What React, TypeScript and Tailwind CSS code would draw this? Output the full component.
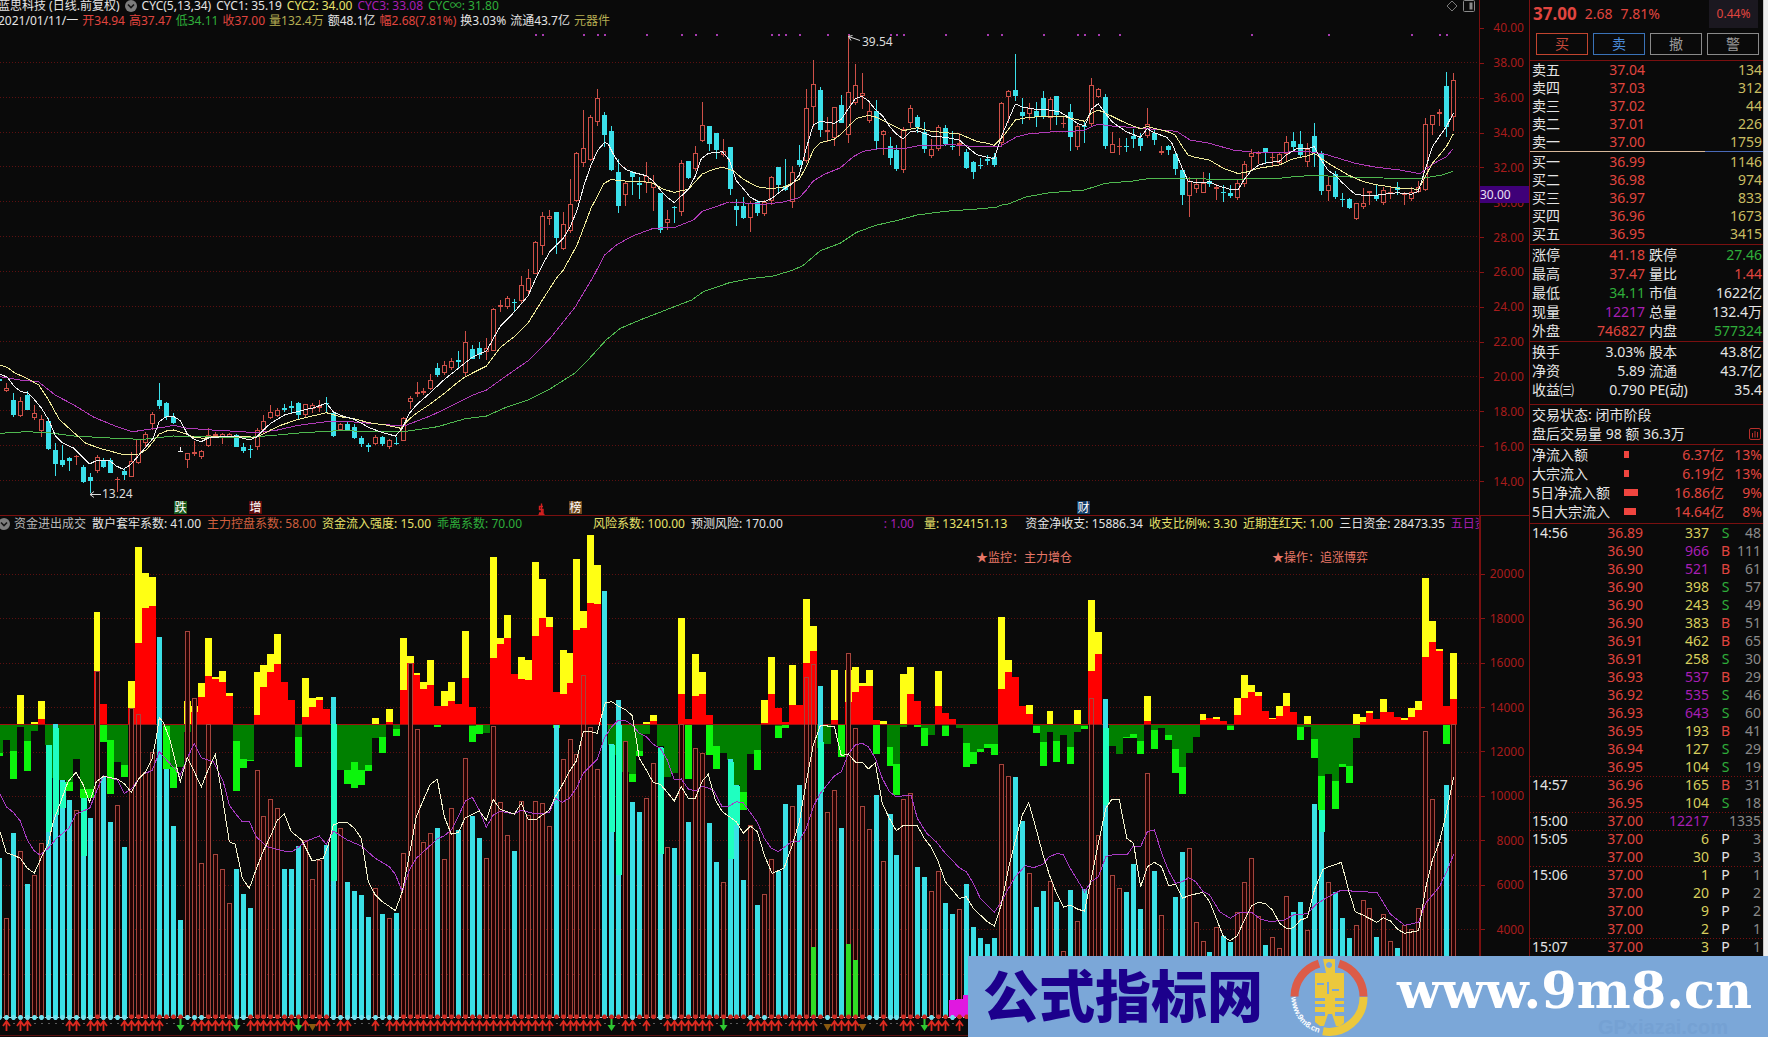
import React from "react";

const FONT = "font-['Noto_Sans','Noto_Sans_CJK_SC',sans-serif]";

/* ---------- chart data (three units per pixel vertically) ---------- */

// kind + high,bodyTop,bodyBottom,low ; r = rising, c = falling
const CANDLES =
  "c1136,1138,1143,1144 r1150,1165,1174,1176 c1178,1200,1244,1252 r1192,1202,1247,1252 c1172,1185,1229,1229 r1215,1240,1253,1260 r1245,1258,1293,1310 c1255,1263,1348,1350 c1330,1350,1391,1427 c1335,1380,1394,1400 c1372,1375,1382,1412 r1364,1367,1371,1395 c1395,1402,1447,1448 c1418,1430,1442,1480 r1366,1370,1414,1418 c1375,1380,1400,1404 c1375,1381,1418,1420 r1430,1436,1441,1476 c1405,1412,1424,1440 r1355,1384,1430,1432 r1318,1318,1390,1392 " +
  "r1296,1302,1330,1342 r1235,1241,1272,1290 c1150,1200,1217,1226 c1206,1209,1252,1260 c1238,1250,1268,1272 w1342,1354,1357,1357 r1358,1360,1379,1403 r1322,1357,1363,1368 r1350,1354,1370,1376 r1285,1305,1337,1340 r1296,1303,1307,1312 r1300,1303,1312,1332 r1300,1303,1312,1312 c1302,1304,1340,1340 c1330,1342,1352,1358 c1335,1348,1350,1373 r1285,1291,1340,1350 r1245,1262,1290,1300 r1216,1235,1253,1257 r1225,1229,1247,1250 " +
  "c1212,1225,1229,1235 c1203,1219,1223,1238 c1205,1208,1244,1257 r1212,1213,1245,1250 r1208,1214,1226,1240 r1200,1219,1224,1236 c1190,1208,1210,1240 c1235,1238,1308,1310 r1270,1273,1291,1293 c1262,1272,1289,1293 c1272,1281,1314,1316 c1308,1315,1331,1340 c1328,1335,1342,1356 r1306,1312,1331,1336 c1308,1311,1332,1338 r1318,1321,1340,1348 c1310,1329,1333,1334 r1250,1253,1322,1324 r1188,1193,1207,1228 r1147,1176,1181,1190 " +
  "r1165,1173,1180,1184 r1122,1141,1167,1170 c1090,1104,1125,1132 r1083,1095,1118,1124 r1075,1083,1105,1110 c1053,1080,1086,1105 r992,1025,1120,1130 c1035,1046,1076,1078 c1027,1044,1064,1078 r1015,1043,1057,1080 r925,926,1052,1054 r900,914,922,936 r888,895,920,928 c896,906,910,936 r828,856,902,910 r806,834,872,886 r723,725,821,823 r637,647,739,766 r630,647,657,676 c636,637,713,762 " +
  "r637,673,748,750 r537,613,692,698 r457,458,602,606 r330,443,488,502 r344,352,480,484 r268,295,365,378 c335,346,405,440 c378,393,509,512 c476,517,617,638 r542,550,586,618 c514,516,530,584 c530,548,556,597 r486,527,550,578 r524,550,564,632 c578,579,689,698 r630,658,670,690 c618,620,622,668 r480,490,637,648 c482,484,534,536 r438,458,508,514 " +
  "r305,376,424,426 c377,379,431,452 c398,400,449,476 r418,452,466,472 c440,442,566,586 c598,619,629,677 c592,618,653,656 r604,609,653,695 c600,606,638,648 r600,605,641,647 r528,530,604,614 c500,502,554,576 c477,557,570,574 r497,515,606,624 c436,480,494,500 r268,325,484,490 r180,253,320,380 c262,270,391,412 r350,391,395,426 r320,322,415,438 " +
  "c286,315,368,370 r104,277,406,428 r192,256,308,316 r220,278,287,326 r310,332,362,368 c300,332,422,450 r390,394,406,464 c412,438,473,496 c436,450,506,512 r382,388,509,518 r316,325,368,384 c345,351,380,398 c366,396,446,460 r418,446,467,474 r374,382,448,454 c374,384,433,438 c392,438,440,450 r400,428,436,468 c448,456,505,508 c484,487,515,536 " +
  "c474,494,498,508 c466,476,484,496 c458,470,495,502 r306,308,428,440 r270,272,290,370 c162,270,287,304 c294,336,349,372 r310,324,342,360 c306,332,351,380 c272,293,349,356 r292,296,355,390 c288,289,344,374 r350,368,372,384 c312,336,410,452 r370,379,441,450 c364,377,382,428 r234,256,372,380 r264,268,290,294 c283,291,437,448 r396,432,458,460 " +
  "r414,437,441,464 c414,437,439,456 c386,408,417,444 c400,414,437,452 r324,371,408,414 c388,398,420,436 r438,454,458,464 c434,438,450,464 c456,461,506,524 c508,511,584,614 r530,542,587,652 r534,553,566,580 r516,548,578,580 c520,543,552,562 r552,562,566,600 c555,575,578,605 c556,578,588,594 r538,549,594,600 r482,493,552,560 r448,460,472,512 " +
  "r452,457,461,492 c444,445,458,490 r460,470,475,498 r458,462,490,496 r407,427,462,484 c396,423,440,456 c394,432,464,470 r428,448,486,502 c370,408,460,500 c452,458,573,584 r532,554,574,602 c512,521,590,598 c580,597,599,620 c594,597,624,628 r608,610,656,660 r564,609,622,626 r572,574,580,616 c552,586,598,604 r560,570,608,614 r558,575,579,596 " +
  "c546,560,570,584 r576,582,586,616 r560,576,598,604 r542,560,576,580 r354,373,569,574 r344,346,374,404 r326,337,341,378 c216,258,380,410 r220,240,350,394";

const VOLUME =
  "c1028 r1210 c954 r1009 c1107 r1080 r985 c690 c628 c795 c855 r885 c850 c908 r468 c785 c921 r871 c996 r580 r598 r770 r710 c367 c762 c933 c1215 r349 r550 r1045 r626 r1018 r1062 r1165 c1062 c1137 c1179 r766 r904 r853 r880 c1062 c1062 c993 r976 r1092 r1035 c990 c547 r940 c1101 c1128 c1140 c1206 r1120 c1197 r1210 c1194 r1015 r445 r643 r982 r955 c939 r1033 r880 c945 r730 c903 c969 r1030 r634 " +
  "r862 r961 c1008 r858 r900 r858 r865 r934 c630 r733 r673 r717 r479 r637 r763 c228 c687 c555 r679 c860 c891 r850 r745 c696 r997 c999 r628 c921 r700 r715 c924 c1041 r1100 c732 c810 c1095 r931 c1170 r1137 r1033 c1069 c867 r874 c810 r487 r448 c513 r891 r826 c939 r415 r640 r874 r942 c840 r1039 c897 c1020 r853 r835 c1056 c1086 r1129 r1069 c1164 c1197 r1183 c1107 c1236 c1269 c1287 c1269 " +
  "r748 r784 c786 c918 r1075 c1176 c1128 r1099 c1161 r1308 c1125 r1219 c1122 r550 r961 c552 r1081 r1120 c1131 c1047 c1182 r775 c1068 r1201 r1330 c1146 c1011 r1000 r1221 r1279 c1311 r1237 c1263 c1281 r1192 r1102 r1030 r1204 c1290 r1267 r1300 r1144 c1191 c1161 r1246 c867 c885 r1102 c1131 c1209 c1269 r1231 r1156 r1180 c1266 r1198 r1279 c1299 r1231 r1243 r1180 r649 r853 r980 c810 r628";

// inflow "yellowTop,redTop" and/or outflow "~darkBottom,brightBottom"
const FLOW =
  "~714,722 ~675 ~708,792 540,628~636 ~678,768 621,628~648 558,612 ~690 ~790 ~795 ~801,828 ~733 ~822,850 ~822,850 291,468 567,567~628,682 ~675,836 ~741 ~750,786 498,580 96,384 174,279 186,273 ~628 ~632,762 ~755,818 ~755 558,628~650 572,590 504,546 369,483 486,492 468,501 534,543 ~678,828 ~732,759 ~735,738 471,600 450,516 417,471 357,447 501,501 555,555 ~666,756 489,606 549,576 546,555 583,583 ~628 ~766 ~765,807 ~741,819 ~765,810 ~750,768 609,628~669 ~666,714 582,621 ~642,663 369,525 423,445 474,480 501,522 435,510 573,573~628,636 528,573 501,558 567,567 348,489 576,576~632,682 626,626~628,657 ~654 126,429 " +
  "369,387 300,369 477,477 426,492 435,495 141,363 192,309 306,336 531,531~628,640 405,537 414,504 132,345 288,339 60,264 150,267 ~628 ~690 ~720 ~772 ~777,801 ~708,723 621,628~657 600,618 ~693 ~786 ~774 309,537 612,612~628,792 417,543 471,537 600,600~628,720 ~693,762 ~714 ~735 ~810 ~830,885 ~717 ~705,765 555,624 426,537 579,579~632,669 621,621~628,639 450,570 570,570 252,444 333,408 ~700 ~687 465,615 ~628,726 465,560 456,531 504,513 465,513 615,615~628,717 618,626 ~696,753 ~747,840 477,628~636 456,537 558,558~628,636 ~639,693 ~660 468,573 594,594~633,663 612,612 ~640 ~684,756 ~711,747 ~702,711 ~687,699 ~687,720 " +
  "306,522 435,471 486,486 573,573 570,597 ~632,654 ~681,753 588,628~651 ~678,741 ~660 ~696,747 585,628~651 ~632,642 255,468 351,417 ~628 ~693 ~717 ~666,670 ~657,669 ~678,717 543,618 ~645,702 ~640 ~660,675 ~702,774 ~756,837 ~714 ~666 597,615 609,609 606,612 618,618 ~632,645 549,600 480,549 510,531 531,543 588,588 608,612 573,603 534,573 591,591 ~636,675 603,628~636 ~672,729 ~783,885 ~777 ~798,882 ~747,755 ~753,804 597,628~669 606,620 588,594 612,612 552,591 591,591 606,606 609,614 579,606 558,585 189,426 318,381 402,408 573,573~628,687 414,552";

// falling bars whose upper part is blended with the outflow colour
const BLENDS: Record<number, [number, number]> = {
  6: [690, 950], 7: [640, 900], 8: [800, 880], 11: [850, 1022], 47: [628, 1098], 87: [690, 950], 88: [630, 1080],
  94: [700, 1018], 104: [740, 1032], 105: [812, 930], 117: [680, 830], 158: [640, 870], 189: [885, 950],
};
const DARK_BARS = [13, 18, 26, 27, 58, 121];
const SIGNAL_DOTS = [76, 77, 83, 85, 86, 92, 97, 99, 102, 110, 111, 112, 114, 118, 121, 127, 128, 129, 135, 141, 143, 149, 154, 155, 157, 160, 179, 190, 202, 206, 207];
const GREEN_VOL: [number, number][] = [[116, 1296], [121, 1287], [122, 1335]];
const MAGENTA_VOL: [number, number][] = [[136, 1455], [137, 1452], [138, 1440]];
const UP_RANGES: [number, number][] = [
  [0, 0], [2, 3], [9, 10], [12, 14], [17, 22], [27, 32], [35, 41], [43, 43], [45, 46], [48, 49], [53, 53], [55, 78], [80, 85],
  [89, 90], [92, 92], [95, 101], [107, 111], [113, 116], [119, 122], [126, 126], [129, 130], [133, 135], [137, 137],
];
const DOWN_GREEN = [25, 33, 42, 87, 103, 132];
const DOWN_GOLD = [44, 118, 123];
const CYAN_DOT_RANGES: [number, number][] = [[-1, 12], [14, 17], [26, 28], [33, 34], [47, 56], [90, 90], [94, 94], [96, 96], [107, 107], [109, 109], [118, 118], [124, 125], [127, 128], [133, 133], [136, 136]];

type Seg = [number, number, string];
const CYC1: Seg[] = [
  [0, 2.45, "0,1122 18,1132 35,1160 52,1175 68,1178 85,1200 102,1225 119,1260 136,1308 152,1328 180,1344 219,1392 236,1382 268,1382 285,1398 302,1408 320,1394 340,1366 358,1340 375,1315 390,1265 407,1250 425,1249 442,1262 459,1302 476,1318 493,1325 511,1314 545,1310 575,1308 594,1314 610,1320 628,1312 645,1290 663,1270 697,1245 731,1234 766,1224 800,1210 817,1236 834,1246 868,1258 903,1282 937,1298 969,1308 986,1284 1003,1240 1020,1215 1054,1178 1089,1138 1123,1105 1157,1072 1192,1052 1209,1015 1226,978 1260,936 1294,887 1311,840 1329,795 1346,757 1363,735 1380,715 1397,680 1414,630 1431,555 1448,495 1465,450"],
  [500, 3, "314,427 325,432 340,462 356,488 377,508 398,517 439,527 460,543 481,570 502,592 523,608 544,588 565,568 586,528 604,476 625,460 667,455 688,480 709,542 730,566 751,592 772,603 793,605 814,596 850,568 877,552 898,525 919,445 940,374 961,364 1003,370 1024,358 1045,326 1066,296 1085,289 1105,302 1127,330 1148,348 1169,380 1189,402 1210,417 1231,396 1252,392 1294,408 1336,412 1378,420 1400,440 1430,464 1462,472 1483,476 1504,410 1546,312"],
  [1000, 3, "67,321 106,328 148,330 180,336 211,355 232,370 255,378 274,328 295,311 316,340 337,366 379,395 421,412 442,386 463,398 500,412 515,428 530,465 547,505 565,545 607,548 628,545 649,556 691,568 715,568 733,538 754,512 775,496 800,488 838,484 859,465 890,446 922,446 943,440 964,480 985,512 1006,525 1024,545 1045,565 1066,583 1110,588 1150,583 1192,578 1234,583 1255,574 1276,508 1297,440 1318,410 1339,380 1360,340"],
];
const CYC2: Seg[] = [
  [0, 2.45, "0,1095 18,1102 35,1118 68,1136 95,1155 119,1200 145,1258 180,1297 210,1330 250,1347 300,1363 340,1362 358,1350 375,1325 390,1302 410,1292 425,1290 442,1296 476,1312 500,1315 520,1310 600,1310 628,1312 663,1290 690,1275 731,1258 800,1238 834,1250 868,1256 903,1268 945,1275 982,1285 1003,1257 1020,1240 1054,1212 1089,1180 1123,1145 1140,1130 1192,1098 1226,1042 1260,1010 1294,968 1329,900 1363,835 1380,810 1414,735 1448,625 1480,550"],
  [500, 3, "335,538 356,542 439,546 460,550 490,568 523,577 565,568 607,522 640,508 667,502 700,512 730,538 772,560 814,566 856,560 898,538 919,500 940,450 961,428 1003,418 1024,402 1050,374 1070,355 1105,346 1130,352 1150,362 1189,382 1210,392 1252,383 1294,394 1378,402 1430,424 1462,430 1483,436 1510,408 1546,360"],
  [1000, 3, "85,352 127,350 190,348 211,355 255,364 274,340 295,330 330,346 379,370 421,386 442,380 500,394 525,404 547,440 565,466 586,472 628,480 670,505 712,520 733,518 775,505 838,495 880,476 922,468 943,460 985,490 1045,525 1087,544 1129,554 1192,564 1255,568 1276,530 1297,490 1318,466 1339,440 1360,402"],
];
const CYC3: Seg[] = [
  [0, 2.45, "0,1130 50,1140 95,1146 136,1186 180,1214 230,1252 290,1282 325,1295 400,1282 425,1276 459,1285 520,1290 575,1294 628,1298 680,1290 731,1276 800,1265 868,1266 945,1274 990,1278 1054,1248 1106,1218 1157,1186 1192,1170 1240,1128 1294,1082 1346,1018 1410,920"],
  [500, 3, "238,900 280,830 314,765 350,734 398,708 460,685 525,682 580,660 607,634 688,606 793,613 850,606 898,593 919,570 940,543 975,522 1020,504 1060,470 1090,454 1130,447 1210,446 1252,438 1357,434 1430,440 1504,439"],
  [1000, 3, "5,436 50,410 85,402 150,396 250,392 274,380 295,373 337,378 420,384 530,394 570,420 628,430 700,450 754,456 838,457 922,454 980,464 1066,490 1129,502 1200,510 1260,521 1297,493 1339,470 1360,446"],
];
const CYC8: Seg[] = [
  [0, 2.45, "0,1300 65,1295 119,1298 180,1308 300,1316 350,1318 425,1308 545,1312 600,1313 680,1305 740,1298 830,1292 950,1295 1000,1293 1072,1280 1140,1256 1192,1248 1240,1222 1294,1200 1346,1168 1410,1118 1448,1070 1485,1020 1520,985 1568,960"],
  [500, 3, "575,900 610,875 688,848 750,836 820,828 880,810 910,796 961,752 1020,730 1070,697 1127,676 1189,662 1252,645 1336,634 1430,627 1490,622"],
  [1000, 3, "0,616 25,612 80,590 150,578 253,570 316,550 400,543 450,535 690,538 838,535 880,530 945,526 1020,530 1150,534 1255,536 1297,530 1330,524 1360,514"],
];
const MA_WHITE: Seg[] = [
  [0, 3, "0,950 19,1013 40,1020 61,1030 82,1060 103,1074 124,1028 145,985 160,920 186,850 204,800 228,772 248,806 269,862 289,800 310,784 352,792 373,806 394,832 415,793 436,772 457,730 470,660 478,608 490,622 510,675 541,800 562,727 583,770 604,816 625,763 646,718 667,845 688,980 706,988 727,1090 748,1120 769,1062 790,1008 811,965 832,916 853,897 874,950 905,975 937,1038 970,1030 985,990 1000,930 1020,922 1042,922 1063,940 1084,970 1105,1100 1126,1140 1147,1160 1168,1174 1186,1187 1207,1130 1228,1020 1249,905 1270,855 1291,808 1312,793 1333,905 1354,958 1375,952 1396,908 1438,888 1459,916 1480,853"],
  [500, 3, "0,883 43,897 64,865 85,914 106,915 148,885 166,845 187,810 208,770 229,738 250,650 271,650 292,655 300,620 316,563 335,560 355,573 377,585 397,602 418,730 439,765 460,803 481,808 502,832 523,858 544,815 565,850 586,850 607,798 625,778 646,855 667,890 709,920 730,955 751,933 772,950 793,1020 816,1075 852,1060 877,990 898,920 919,800 940,690 961,632 1003,634 1024,722 1045,717 1066,741 1087,741 1105,762 1126,743 1147,865 1168,910 1189,947 1210,931 1252,932 1273,970 1294,997 1315,1040 1336,1100 1378,1150 1399,1145 1420,1180 1462,1220 1483,1233"],
  [1000, 2.958, "4,1168 25,1060 45,980 66,900 85,863 105,935 126,1015 146,1080 167,1135 188,1176 208,1170 229,1182 250,1189 270,1090 291,985 313,880 330,854 353,854 375,970 395,985 416,1115 436,1055 457,1042 478,1055 499,1112 519,1108 540,1150 558,1142 599,1132 620,1160 661,1265 681,1277 702,1262 723,1215 744,1172 764,1162 785,1166 806,1185 827,1225 850,1242 868,1238 889,1215 909,1208 930,1125 955,1064 971,1056 1010,1042 1031,1125 1051,1190 1073,1200 1115,1222 1134,1208 1155,1218 1176,1243 1197,1255 1238,1247 1259,1120 1279,1035 1300,980 1321,890 1342,785"],
];
const MA_PURPLE: Seg[] = [
  [0, 3, "0,838 19,875 40,892 61,918 82,975 103,1008 120,1020 145,1000 170,970 208,938 228,897 269,880 289,830 310,782 352,795 373,835 394,822 425,780 457,766 478,710 500,735 541,780 562,730 583,685 604,728 640,740 670,800 688,870 706,895 727,920 748,920 769,965 800,995 832,1003 853,1008 880,1008 920,978 958,963 979,988 1000,948 1042,975 1084,993 1126,1030 1168,1055 1186,1078 1207,1130 1228,1065 1249,1030 1312,972 1333,962 1354,945 1375,905 1396,858 1417,847 1438,885 1459,937 1480,900"],
  [500, 3, "0,889 43,897 64,885 106,897 148,893 166,850 187,862 208,850 229,820 250,775 292,733 313,670 335,635 355,615 377,617 397,630 418,655 439,665 460,688 481,700 502,735 523,795 544,792 565,822 586,828 607,813 640,825 667,876 688,873 709,860 730,863 772,922 793,970 814,1000 835,1010 877,978 898,978 919,940 940,875 961,835 1003,783 1024,770 1045,717 1066,690 1087,685 1105,695 1126,730 1147,790 1168,830 1189,845 1233,840 1252,910 1280,955 1310,982 1336,1015 1378,1058 1399,1070 1420,1105 1441,1150 1462,1170 1483,1192"],
  [1000, 2.958, "4,1160 25,1120 45,1085 75,1052 100,1058 126,1048 146,1025 170,1015 188,1020 208,1060 250,1130 270,1100 291,1085 313,1025 340,1018 375,1020 395,993 416,995 436,950 457,945 478,1015 499,1068 519,1105 540,1100 558,1088 579,1100 599,1128 620,1140 650,1190 681,1210 710,1192 744,1192 770,1212 800,1220 840,1215 868,1200 909,1196 935,1168 971,1145 1010,1125 1060,1130 1115,1132 1155,1198 1197,1231 1238,1222 1259,1165 1300,1115 1321,1070 1342,1018"],
];

const trace = (segs: Seg[], top: number) =>
  segs
    .map(([x0, k, pts]) =>
      pts
        .split(" ")
        .map((p) => {
          const [x, y] = p.split(",").map(Number);
          return `${(x0 + x / k).toFixed(1)},${(top + y / 3).toFixed(1)}`;
        })
        .join(" "),
    )
    .join(" ");

const cx = (i: number) => Math.floor(6.6 + 6.956 * i);
const inRanges = (i: number, ranges: [number, number][]) => ranges.some(([a, b]) => i >= a && i <= b);

/* ---------- charts ---------- */

function Line({ segs, top, color }: { segs: Seg[]; top: number; color: string }) {
  return <polyline points={trace(segs, top)} fill="none" stroke={color} strokeWidth={1} shapeRendering="crispEdges" />;
}

function PriceChart() {
  return (
    <svg viewBox="0 29 1479 486" preserveAspectRatio="none" className="block h-[486px] w-full" role="img" aria-label="日线K线图">
      {Array.from({ length: 13 }, (_, k) => {
        const y = Math.round(28 + 34.85 * (k + 1)) - 0.5;
        return <line key={k} x1={0} x2={1479} y1={y} y2={y} stroke="#5c1010" strokeDasharray="1 2" />;
      })}
      {SIGNAL_DOTS.map((i) => (
        <rect key={i} x={cx(i)} y={34} width={2} height={2} fill="#a83bb0" />
      ))}
      <g shapeRendering="crispEdges">
        {CANDLES.split(" ").map((t, n) => {
          const c = cx(n - 1);
          const [h, a, b, l] = t.slice(1).split(",").map((v) => Math.round(Number(v) / 3));
          const bh = Math.max(1, b - a);
          if (t[0] === "r")
            return (
              <g key={n} fill="#cf5048">
                <rect x={c} y={h} width={1} height={Math.max(0, a - h)} />
                <rect x={c} y={b} width={1} height={Math.max(0, l - b)} />
                {bh < 3 ? <rect x={c - 2} y={a} width={5} height={bh} /> : <rect x={c - 1.5} y={a + 0.5} width={4} height={bh - 1} fill="none" stroke="#cf5048" />}
              </g>
            );
          return (
            <g key={n} fill={t[0] === "w" ? "#eeeeee" : "#3be0ea"}>
              <rect x={c} y={h} width={1} height={Math.max(1, l - h)} />
              <rect x={c - 2} y={a} width={5} height={bh} />
            </g>
          );
        })}
      </g>
      <Line segs={CYC8} top={0} color="#4fb84f" />
      <Line segs={CYC3} top={0} color="#b03bb8" />
      <Line segs={CYC2} top={0} color="#f0eb9a" />
      <Line segs={CYC1} top={0} color="#f2f2f2" />
      <path d="M848.5 36.500L860 40.500M848.500 36.500l4-1M848.500 36.500l2.500 4M90 494.500H101M90 494.500l4-3M90 494.500l4 3" fill="none" stroke="#dddddd" />
      <path d="M543 506.500h-3.500v3h3.500v3.500h-4M541.500 503.500v11M538.500 514.500h6" fill="none" stroke="#d22020" strokeWidth={1.4} />
    </svg>
  );
}

function FlowChart() {
  const Y = (v: number) => Math.round(515 + v / 3);
  const base = 724;
  const floor = 1017;
  return (
    <svg viewBox="0 532 1479 505" preserveAspectRatio="none" className="block h-[505px] w-full" role="img" aria-label="资金进出成交图">
      {Array.from({ length: 10 }, (_, k) => {
        const y = Math.round(574 + 44.4 * k) + 0.5;
        return <line key={k} x1={0} x2={1479} y1={y} y2={y} stroke="#5c1010" strokeDasharray="1 2" />;
      })}
      <g shapeRendering="crispEdges">
        {FLOW.split(" ").map((t, n) => {
          const i = n - 1;
          const x = cx(i) - 3;
          const w = cx(i + 1) - 3 - x;
          const [up, down] = t.split("~");
          const parts: React.ReactNode[] = [];
          if (down) {
            const [d, b] = down.split(",").map((v) => Y(Number(v)));
            parts.push(<rect key="d" x={x} y={base} width={w} height={Math.max(0, d - base)} fill="#008000" />);
            if (b) parts.push(<rect key="b" x={x} y={d} width={w} height={Math.max(0, b - d)} fill="#0cf50c" />);
          }
          if (up) {
            const [y, r] = up.split(",").map((v) => Y(Number(v)));
            parts.push(<rect key="y" x={x} y={y} width={w} height={r - y} fill="#ffff14" />);
            parts.push(<rect key="r" x={x} y={r} width={w} height={Math.max(0, base + 1 - r)} fill="#ff0000" />);
          }
          return <g key={n}>{parts}</g>;
        })}
        <rect x={0} y={base} width={1457} height={1} fill="#a01010" />
        {VOLUME.split(" ").map((t, n) => {
          const i = n - 1;
          const c = cx(i);
          const y = Y(Number(t.slice(1)));
          if (t[0] === "c") return <rect key={n} x={c - 2} y={y} width={5} height={floor - y} fill="#3be0e6" />;
          const dark = DARK_BARS.includes(i);
          const fillTop = dark ? y : Math.max(y, base + 1);
          return (
            <g key={n}>
              <rect x={c - 2} y={fillTop} width={5} height={floor - fillTop} fill="#240202" />
              <rect x={c - 1.5} y={y + 0.5} width={4} height={floor - y} fill="none" stroke="#a5453d" />
            </g>
          );
        })}
        {Object.entries(BLENDS).map(([i, [a, b]]) => (
          <rect key={i} x={cx(Number(i)) - 2} y={Y(a)} width={6} height={Y(b) - Y(a)} fill="#1fffc0" />
        ))}
        {GREEN_VOL.map(([i, v]) => (
          <rect key={i} x={cx(i) - 2} y={Y(v)} width={5} height={floor - Y(v)} fill="#30dc26" />
        ))}
        {MAGENTA_VOL.map(([i, v]) => (
          <rect key={i} x={cx(i) - 3} y={Y(v)} width={7} height={floor - Y(v)} fill="#e018e0" />
        ))}
      </g>
      <Line segs={MA_PURPLE} top={515} color="#a83bc4" />
      <Line segs={MA_WHITE} top={515} color="#f6f4d0" />
      <line x1={0} x2={1457} y1={1017.5} y2={1017.5} stroke="#d8d8d8" strokeDasharray="2 1" />
      {Array.from({ length: 140 }, (_, n) => {
        const c = cx(n - 1) + 0.5;
        return inRanges(n - 1, CYAN_DOT_RANGES) ? (
          <path key={n} d={`M${c - 3} 1017.500l2-2.500h2l2 2.500l-2 2.500h-2z`} fill="#6fe2ee" />
        ) : (
          <path key={n} d={`M${c - 3} 1017l2-2.500h2l2 2.500l-2 2h-2z`} fill="#cc2a22" />
        );
      })}
      {Array.from({ length: 138 }, (_, i) => {
        const c = cx(i) + 0.5;
        if (inRanges(i, UP_RANGES)) return <path key={i} d={`M${c} 1031V1021M${c - 3.5} 1026l3.500-5l3.500 5`} fill="none" stroke="#dc2a20" strokeWidth={1.8} />;
        if (DOWN_GREEN.includes(i)) return <path key={i} d={`M${c - 1} 1019h2v6h3l-4 6l-4-6h3z`} fill="#2fc832" />;
        if (DOWN_GOLD.includes(i)) return <path key={i} d={`M${c - 4} 1024h8l-4 7z`} fill="#8a5a10" />;
        return <rect key={i} x={c} y={1023} width={1} height={1} fill="#aaaaaa" />;
      })}
      <line x1={0} x2={1479} y1={1035.5} y2={1035.5} stroke="#5a0f0f" />
    </svg>
  );
}

/* ---------- header texts ---------- */

function Toggle({ label }: { label: string }) {
  return (
    <button type="button" aria-label={label} className="flex size-3 shrink-0 items-center justify-center rounded-full bg-[#7d7d7d]">
      <svg viewBox="0 0 12 12" className="size-3" fill="none" stroke="#151515" strokeWidth="1.600">
        <path d="M3 4.500L6 7.500L9 4.500" />
      </svg>
    </button>
  );
}

const T = ({ c, children }: { c: string; children: React.ReactNode }) => <span className={c}>{children}</span>;

const WHITE = "text-[#e4e4e4]";
const RED = "text-[#e0453f]";
const GREEN = "text-[#2fae3a]";
const OLIVE = "text-[#b5ad52]";
const YELLOW = "text-[#e8e26a]";
const PURPLE = "text-[#a81fb4]";
const ORANGE = "text-[#d2603f]";

function PriceHeader() {
  return (
    <header className="h-[29px] whitespace-nowrap text-xs">
      <div className="flex h-[11px] items-center gap-[5px] leading-none">
        <span className="-ml-0.5 text-[#e4e4e4]">蓝思科技 (日线.前复权)</span>
        <Toggle label="指标菜单" />
        <T c={WHITE}>CYC(5,13,34)</T>
        <T c={WHITE}>CYC1: 35.19</T>
        <T c={YELLOW}>CYC2: 34.00</T>
        <T c={PURPLE}>CYC3: 33.08</T>
        <T c={GREEN}>CYC∞: 31.80</T>
        <button type="button" aria-label="标记" className="ml-auto">
          <svg viewBox="0 0 12 12" className="size-3" fill="none" stroke="#7a7a7a">
            <path d="M6 1L11 6L6 11L1 6Z" />
          </svg>
        </button>
        <button type="button" aria-label="侧栏" className="mr-1">
          <svg viewBox="0 0 12 12" className="size-3" fill="none" stroke="#8a8a8a">
            <rect x="0.500" y="0.500" width="11" height="11" rx="1" />
            <rect x="7" y="3" width="2" height="6" fill="#8a8a8a" />
          </svg>
        </button>
      </div>
      <div className="mt-0.5 -ml-0.5 flex gap-1 leading-4">
        <T c={WHITE}>2021/01/11/一</T>
        <T c={RED}>开34.94</T>
        <T c={RED}>高37.47</T>
        <T c={GREEN}>低34.11</T>
        <T c={RED}>收37.00</T>
        <T c={OLIVE}>量132.4万</T>
        <T c={WHITE}>额48.1亿</T>
        <T c={RED}>幅2.68(7.81%)</T>
        <T c={WHITE}>换3.03%</T>
        <T c={WHITE}>流通43.7亿</T>
        <T c={OLIVE}>元器件</T>
      </div>
    </header>
  );
}

function FlowHeader() {
  return (
    <header className="flex h-4 items-center gap-1.5 overflow-hidden whitespace-nowrap text-xs leading-4">
      <span className="-ml-0.5 flex items-center gap-1 text-[#b8b8b8]">
        <Toggle label="副图指标菜单" />
        资金进出成交
      </span>
      <T c={WHITE}>散户套牢系数: 41.00</T>
      <T c={ORANGE}>主力控盘系数: 58.00</T>
      <T c={YELLOW}>资金流入强度: 15.00</T>
      <T c={GREEN}>乖离系数: 70.00</T>
      <T c="text-[#e8e26a] ml-[65px]">风险系数: 100.00</T>
      <T c={WHITE}>预测风险: 170.00</T>
      <T c="text-[#a81fb4] ml-[95px]">: 1.00</T>
      <T c="text-[#e8e26a] ml-1">量: 1324151.13</T>
      <T c="text-[#e4e4e4] ml-3">资金净收支: 15886.34</T>
      <T c={YELLOW}>收支比例%: 3.30</T>
      <T c={YELLOW}>近期连红天: 1.00</T>
      <T c={WHITE}>三日资金: 28473.35</T>
      <T c={PURPLE}>五日资金</T>
    </header>
  );
}

/* ---------- quote panel ---------- */

type Row4 = [string, string, string, string, string, string];
const SELL = [["卖五", "37.04", "134"], ["卖四", "37.03", "312"], ["卖三", "37.02", "44"], ["卖二", "37.01", "226"], ["卖一", "37.00", "1759"]];
const BUY = [["买一", "36.99", "1146"], ["买二", "36.98", "974"], ["买三", "36.97", "833"], ["买四", "36.96", "1673"], ["买五", "36.95", "3415"]];
const INFO1: Row4[] = [
  ["涨停", "41.18", RED, "跌停", "27.46", GREEN],
  ["最高", "37.47", RED, "量比", "1.44", RED],
  ["最低", "34.11", GREEN, "市值", "1622亿", WHITE],
  ["现量", "12217", PURPLE, "总量", "132.4万", WHITE],
  ["外盘", "746827", RED, "内盘", "577324", GREEN],
];
const INFO2: Row4[] = [
  ["换手", "3.03%", WHITE, "股本", "43.8亿", WHITE],
  ["净资", "5.89", WHITE, "流通", "43.7亿", WHITE],
  ["收益㈢", "0.790", WHITE, "PE(动)", "35.4", WHITE],
];
const MONEY = [
  ["净流入额", "w-[5px]", "6.37亿", "13%"],
  ["大宗流入", "w-[5px]", "6.19亿", "13%"],
  ["5日净流入额", "w-[14px]", "16.86亿", "9%"],
  ["5日大宗流入", "w-[12px]", "14.64亿", "8%"],
];
const TICKS = (
  "14:56 36.89 337 S 48|- 36.90 966* B 111|- 36.90 521* B 61|- 36.90 398 S 57|- 36.90 243 S 49|- 36.90 383 B 51|- 36.91 462 B 65|- 36.91 258 S 30|- 36.93 537* B 29|- 36.92 535* S 46|- 36.93 643* S 60|- 36.95 193 B 41|- 36.94 127 S 29|- 36.95 104 S 19|" +
  "14:57 36.96 165 B 31|- 36.95 104 S 18|15:00 37.00 12217* - 1335|15:05 37.00 6 P 3|- 37.00 30 P 3|15:06 37.00 1 P 1|- 37.00 20 P 2|- 37.00 9 P 2|- 37.00 2 P 1|15:07 37.00 3 P 1"
)
  .split("|")
  .map((r) => r.split(" "));
const SIDE: Record<string, string> = { S: GREEN, B: RED, P: WHITE };

function Book({ rows }: { rows: string[][] }) {
  return (
    <table className="w-full table-fixed leading-[18px]">
      <tbody>
        {rows.map(([n, p, v]) => (
          <tr key={n}>
            <th scope="row" className="w-[50px] p-0 pl-0.5 text-left font-normal">{n}</th>
            <td className="w-[65px] p-0 text-right text-[#e0453f]">{p}</td>
            <td className="p-0 pr-px text-right text-[#c9bd62]">{v}</td>
          </tr>
        ))}
      </tbody>
    </table>
  );
}

function Info({ rows }: { rows: Row4[] }) {
  return (
    <table className="w-full table-fixed leading-[19px]">
      <tbody>
        {rows.map(([a, b, bc, c, d, dc]) => (
          <tr key={a}>
            <th scope="row" className="w-[50px] p-0 pl-0.5 text-left font-normal whitespace-nowrap">{a}</th>
            <td className="w-[65px] p-0 text-right"><span className={bc}>{b}</span></td>
            <th scope="row" className="w-[48px] p-0 pl-1 text-left font-normal whitespace-nowrap">{c}</th>
            <td className="p-0 pr-px text-right"><span className={dc}>{d}</span></td>
          </tr>
        ))}
      </tbody>
    </table>
  );
}

const BUTTONS = [
  ["买", "border-[#c2452f] text-[#c84a3c]"],
  ["卖", "border-[#3a72b8] text-[#4a8ad8]"],
  ["撤", "border-[#8a8a8a] text-[#9a9a9a]"],
  ["警", "border-[#8a8a8a] text-[#9a9a9a]"],
];

function QuotePanel() {
  return (
    <aside className="w-[234px] shrink-0 overflow-hidden border-l border-[#7a1010] text-sm text-[#e4e4e4]">
      <div className="flex h-7 items-center pl-[3px] text-[#e0453f]">
        <strong className="text-[17px] font-bold">37.00</strong>
        <span className="ml-2">2.68</span>
        <span className="ml-2">7.81%</span>
        <span className="mr-[5px] ml-auto flex h-7 w-[49px] items-center justify-center bg-[#1b1820] text-xs">0.44%</span>
      </div>
      <div className="grid grid-cols-4 gap-[5px] border-b border-[#7a1010] pt-[5px] pr-1 pb-[5px] pl-1.5">
        {BUTTONS.map(([t, c]) => (
          <button key={t} type="button" className={`h-[22px] border leading-5 ${c}`}>{t}</button>
        ))}
      </div>
      <Book rows={SELL} />
      <div className="flex h-px">
        <div className="w-3/4 bg-[#d8b89a]" />
        <div className="flex-1 bg-[#4a6ab8]" />
      </div>
      <div className="border-b border-[#7a1010] py-px"><Book rows={BUY} /></div>
      <div className="border-b border-[#7a1010] pb-px"><Info rows={INFO1} /></div>
      <div className="border-b border-[#7a1010] pb-[5px]"><Info rows={INFO2} /></div>
      <div className="border-b border-[#7a1010] pb-px pl-0.5 leading-[19px]">
        <p>交易状态: 闭市阶段</p>
        <div className="flex items-center">
          <p>盘后交易量 98 额 36.3万</p>
          <button type="button" aria-label="盘后图" className="mr-0.5 ml-auto">
            <svg viewBox="0 0 12 12" className="size-3" fill="none" stroke="#b8302c">
              <rect x="0.500" y="0.500" width="11" height="11" rx="1.500" />
              <path d="M3.500 9.500V5M6 9.500V3M8.500 9.500V4" />
            </svg>
          </button>
        </div>
      </div>
      <div className="border-b border-[#7a1010] pb-0.5">
        <table className="w-full table-fixed leading-[19px]">
          <tbody>
            {MONEY.map(([n, w, v, p]) => (
              <tr key={n}>
                <th scope="row" className="w-[94px] p-0 pl-0.5 text-left font-normal whitespace-nowrap">{n}</th>
                <td className="w-5 p-0"><div className={`h-[7px] bg-[#f0453f] ${w}`} /></td>
                <td className="p-0 text-right text-[#e0453f]">{v}</td>
                <td className="w-[39px] p-0 pr-px text-right text-[#e0453f]">{p}</td>
              </tr>
            ))}
          </tbody>
        </table>
      </div>
      <table className="w-full table-fixed border-collapse leading-[18px]">
        <tbody>
          {TICKS.map(([t, p, v, s, n], k) => (
            <tr key={k} className={t !== "-" && k > 0 ? "bg-[repeating-linear-gradient(90deg,#7a1010_0_1px,transparent_1px_3px)] bg-[length:100%_1px] bg-no-repeat" : ""}>
              <th scope="row" className="w-[50px] p-0 pl-0.5 text-left font-normal">{t === "-" ? "" : t}</th>
              <td className="w-[63px] p-0 text-right text-[#e0453f]">{p}</td>
              <td className="w-[66px] p-0 text-right"><span className={v.endsWith("*") ? PURPLE : "text-[#d8cf5e]"}>{v.replace("*", "")}</span></td>
              <td className="w-[33px] p-0 text-center"><span className={SIDE[s]}>{s === "-" ? "" : s}</span></td>
              <td className="p-0 pr-0.5 text-right text-[#8a8a8a]"><span className="-ml-4">{n}</span></td>
            </tr>
          ))}
        </tbody>
      </table>
    </aside>
  );
}

/* ---------- axes, banner ---------- */

function Axis({ labels }: { labels: string[] }) {
  return (
    <>
      {labels.map((l) => (
        <div key={l} className="flex flex-1 items-center">
          <span className="h-px w-1 bg-[#8a1414]" />
          <span className="mr-[5px] ml-auto text-xs leading-none text-[#a81c1c]">{l}</span>
        </div>
      ))}
    </>
  );
}

function Banner() {
  return (
    <div className="absolute right-0 bottom-0 flex h-[81px] w-[800px] items-center overflow-hidden bg-[#7ba7d8]">
      <span className="absolute right-10 bottom-0 font-['Liberation_Sans',sans-serif] text-xl leading-5 font-bold text-[#75a1d3]">GPxiazai.com</span>
      <span className="mb-1 ml-[15px] text-[56px] leading-none font-black whitespace-nowrap text-[#1c008c]">公式指标网</span>
      <svg viewBox="0 0 78 78" className="ml-[27px] size-[78px] shrink-0">
        <path d="M4.500 38.500A34.500 34.500 0 0 1 29 5.600" fill="none" stroke="#dc5c48" strokeWidth="8" />
        <path d="M49 5.600A34.500 34.500 0 0 1 73.500 38.500" fill="none" stroke="#dc5c48" strokeWidth="8" />
        <path d="M73.500 39A34.500 34.500 0 0 1 33 73.300" fill="none" stroke="#ecc83c" strokeWidth="8" />
        <path fillRule="evenodd" fill="#ecc83c" d="M33 1h12v14h9v25h-9v3h9v3h-9v3h9v5h-9v4h9v7l-4 3h-4l-4-12h-4l-4 12h-4l-5-4v-6h10v-4h-10v-5h10v-3h-10v-3h10v-3h-10v-25h11zM39 4a3 3 0 1 0 .1 0zM27 27h7v-2h-7zM37 36h2v-12h-2zM42 33h7v-2h-7z" />
        <path id="ring" d="M1.500 39A37 37 0 0 0 30 75" fill="none" />
        <text className="fill-white font-['Liberation_Sans'] text-[8px] font-bold">
          <textPath href="#ring">www.9m8.cn</textPath>
        </text>
      </svg>
      <a href="#top" className="mb-3 ml-[29px] font-['DejaVu_Serif',serif] text-[51px] leading-none font-bold whitespace-nowrap text-white">www.9m8.cn</a>
    </div>
  );
}

const Badge = ({ c, children }: { c: string; children: string }) => (
  <span className={`absolute top-[501px] flex size-[13px] items-center justify-center text-xs leading-none text-white ${c}`}>{children}</span>
);

export default function App() {
  const price = Array.from({ length: 14 }, (_, k) => (40 - 2 * k).toFixed(2));
  const flow = Array.from({ length: 9 }, (_, k) => String(20000 - 2000 * k));
  return (
    <div className={`relative flex max-h-screen overflow-hidden bg-[#0a0a0a] ${FONT}`}>
      <main className="min-w-0 flex-1">
        <section className="flex h-[515px]">
          <div className="relative min-w-0 flex-1">
            <PriceHeader />
            <PriceChart />
            <span className="absolute top-[34px] left-[862px] text-xs text-[#dddddd]">39.54</span>
            <span className="absolute top-[486px] left-[102px] text-xs text-[#dddddd]">13.24</span>
            <Badge c="left-[174px] bg-[#1a5a1c]">跌</Badge>
            <Badge c="left-[249px] bg-[#5c0c0c]">增</Badge>
            <Badge c="left-[569px] bg-[#6e481c]">榜</Badge>
            <Badge c="left-[1077px] bg-[#123c66]">财</Badge>
          </div>
          <div className="relative w-[50px] shrink-0 border-l border-[#7a1010]">
            <div className="mt-[11px] flex h-[488px] flex-col"><Axis labels={price} /></div>
            <span className="absolute top-[186px] left-0 flex h-[17px] w-full items-center bg-[#3f0078] text-xs text-[#e8e0f4]">30.00</span>
          </div>
        </section>
        <section className="flex border-t border-[#7a1010]">
          <div className="relative min-w-0 flex-1">
            <FlowHeader />
            <FlowChart />
            <span className="absolute top-[34px] left-[976px] text-xs text-[#e87868]">★监控：主力增仓</span>
            <span className="absolute top-[34px] left-[1272px] text-xs text-[#e87868]">★操作：追涨博弈</span>
          </div>
          <div className="w-[50px] shrink-0 border-l-2 border-[#7a1010]">
            <div className="mt-9 flex h-[400px] flex-col"><Axis labels={flow} /></div>
          </div>
        </section>
      </main>
      <QuotePanel />
      <div className="w-[5px] shrink-0 border-l border-[#c8c8c8] bg-[#eeeeee]" />
      <Banner />
    </div>
  );
}
